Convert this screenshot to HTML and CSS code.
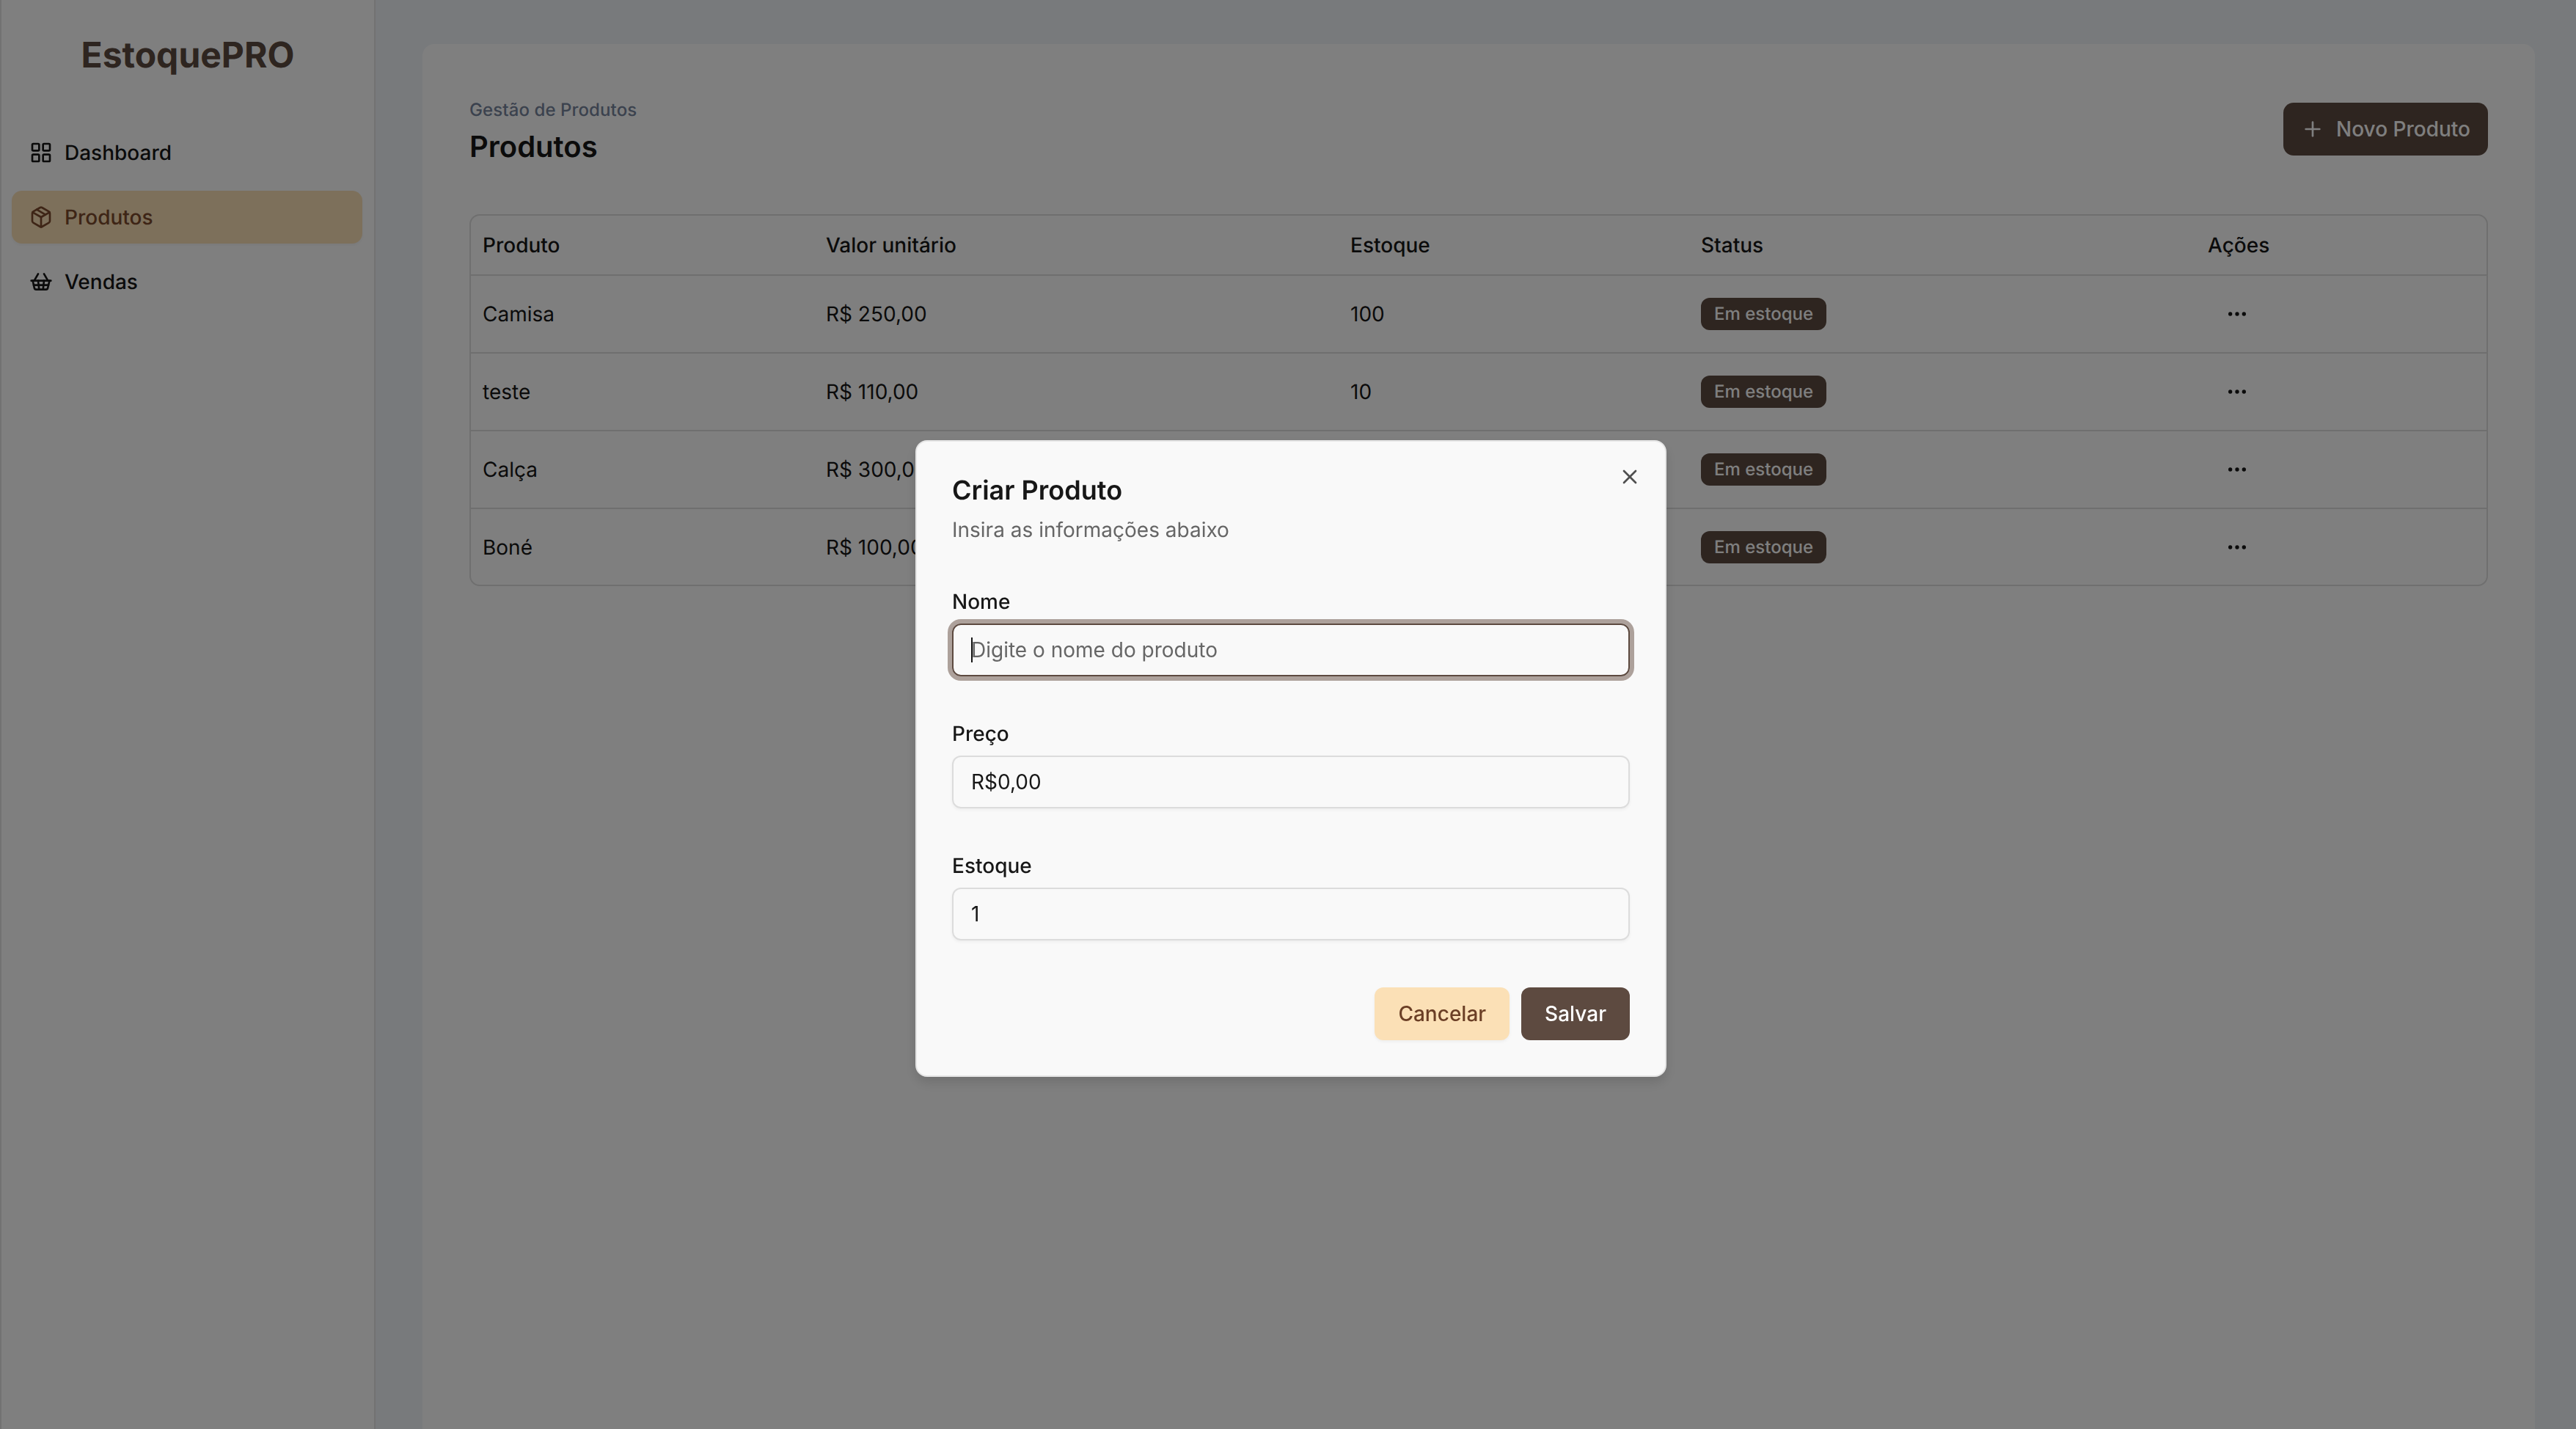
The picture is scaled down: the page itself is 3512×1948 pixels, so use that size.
FILE: index.html
```html
<!DOCTYPE html>
<html>
<head>
    <title>EstoquePRO</title>
    <link rel="stylesheet" href="styles.css">
</head>
<body>
    <div class="app">
        <aside class="sidebar">
            <div class="brand">EstoquePRO</div>
            <nav class="nav">
                <a class="nav-item">
                    <svg class="icon" viewBox="0 0 24 24"><rect x="3" y="3" width="7" height="7" rx="1"/><rect x="14" y="3" width="7" height="7" rx="1"/><rect x="14" y="14" width="7" height="7" rx="1"/><rect x="3" y="14" width="7" height="7" rx="1"/></svg>
                    Dashboard
                </a>
                <a class="nav-item active">
                    <svg class="icon" viewBox="0 0 24 24"><path d="M11 21.73a2 2 0 0 0 2 0l7-4A2 2 0 0 0 21 16V8a2 2 0 0 0-1-1.73l-7-4a2 2 0 0 0-2 0l-7 4A2 2 0 0 0 3 8v8a2 2 0 0 0 1 1.73z"/><path d="M12 22V12"/><polyline points="3.29 7 12 12 20.71 7"/><path d="m7.5 4.27 9 5.15"/></svg>
                    Produtos
                </a>
                <a class="nav-item">
                    <svg class="icon" viewBox="0 0 24 24"><path d="m15 11-1 9"/><path d="m19 11-4-7"/><path d="M2 11h20"/><path d="m3.5 11 1.6 7.4a2 2 0 0 0 2 1.6h9.8a2 2 0 0 0 2-1.6l1.7-7.4"/><path d="M4.5 15.5h15"/><path d="m5 11 4-7"/><path d="m9 11 1 9"/></svg>
                    Vendas
                </a>
            </nav>
        </aside>

        <main class="main">
            <section class="card">
                <header class="page-header">
                    <div>
                        <p class="crumb">Gestão de Produtos</p>
                        <h1 class="page-title">Produtos</h1>
                    </div>
                    <button class="btn-new">
                        <svg class="icon" viewBox="0 0 24 24"><path d="M5 12h14"/><path d="M12 5v14"/></svg>
                        Novo Produto
                    </button>
                </header>

                <div class="table-wrap">
                    <table class="table">
                        <thead>
                            <tr>
                                <th class="col-name">Produto</th>
                                <th class="col-price">Valor unitário</th>
                                <th class="col-stock">Estoque</th>
                                <th class="col-status">Status</th>
                                <th class="col-actions">Ações</th>
                            </tr>
                        </thead>
                        <tbody>
                            <tr>
                                <td>Camisa</td>
                                <td>R$ 250,00</td>
                                <td>100</td>
                                <td><span class="badge">Em estoque</span></td>
                                <td><svg class="icon dots" viewBox="0 0 24 24"><circle cx="12" cy="12" r="1"/><circle cx="19" cy="12" r="1"/><circle cx="5" cy="12" r="1"/></svg></td>
                            </tr>
                            <tr>
                                <td>teste</td>
                                <td>R$ 110,00</td>
                                <td>10</td>
                                <td><span class="badge">Em estoque</span></td>
                                <td><svg class="icon dots" viewBox="0 0 24 24"><circle cx="12" cy="12" r="1"/><circle cx="19" cy="12" r="1"/><circle cx="5" cy="12" r="1"/></svg></td>
                            </tr>
                            <tr>
                                <td>Calça</td>
                                <td>R$ 300,00</td>
                                <td>50</td>
                                <td><span class="badge">Em estoque</span></td>
                                <td><svg class="icon dots" viewBox="0 0 24 24"><circle cx="12" cy="12" r="1"/><circle cx="19" cy="12" r="1"/><circle cx="5" cy="12" r="1"/></svg></td>
                            </tr>
                            <tr>
                                <td>Boné</td>
                                <td>R$ 100,00</td>
                                <td>20</td>
                                <td><span class="badge">Em estoque</span></td>
                                <td><svg class="icon dots" viewBox="0 0 24 24"><circle cx="12" cy="12" r="1"/><circle cx="19" cy="12" r="1"/><circle cx="5" cy="12" r="1"/></svg></td>
                            </tr>
                        </tbody>
                    </table>
                </div>
            </section>
        </main>
    </div>

    <div class="overlay"></div>

    <div class="modal">
        <svg class="icon modal-close" viewBox="0 0 24 24"><path d="M18 6 6 18"/><path d="m6 6 12 12"/></svg>
        <h2 class="modal-title">Criar Produto</h2>
        <p class="modal-desc">Insira as informações abaixo</p>

        <form class="form">
            <div class="field">
                <label for="nome">Nome</label>
                <div class="input-box">
                    <input id="nome" class="input focused" type="text" placeholder="Digite o nome do produto">
                    <span class="caret"></span>
                </div>
            </div>
            <div class="field">
                <label for="preco">Preço</label>
                <input id="preco" class="input" type="text" value="R$0,00">
            </div>
            <div class="field">
                <label for="estoque">Estoque</label>
                <input id="estoque" class="input" type="text" value="1">
            </div>
            <div class="modal-actions">
                <button type="button" class="btn-cancel">Cancelar</button>
                <button type="button" class="btn-save">Salvar</button>
            </div>
        </form>
    </div>
</body>
</html>
```

FILE: styles.css
```css
* {
    box-sizing: border-box;
}

html, body {
    margin: 0;
    height: 100%;
    overflow: hidden;
}

body {
    font-family: Inter, "Liberation Sans", sans-serif;
    font-size: 28px;
    color: #171717;
    text-rendering: geometricPrecision;
}

.icon {
    width: 32px;
    height: 32px;
    flex-shrink: 0;
    fill: none;
    stroke: currentColor;
    stroke-width: 2;
    stroke-linecap: round;
    stroke-linejoin: round;
}

.app {
    display: flex;
    height: 1948px;
    background-color: #f1f5f9;
}

/* sidebar */
.sidebar {
    width: 512px;
    flex-shrink: 0;
    padding: 0 16px;
    background-color: #fff;
    border-left: 2px solid #e5e5e5;
    border-right: 2px solid #e5e5e5;
}

.brand {
    margin-top: 46px;
    height: 58px;
    line-height: 58px;
    text-align: center;
    font-size: 48px;
    font-weight: 700;
    color: #5d4a40;
}

.nav {
    display: flex;
    flex-direction: column;
    gap: 16px;
    margin-top: 68px;
    margin-left: -2px;
}

.nav-item {
    display: flex;
    align-items: center;
    gap: 16px;
    height: 72px;
    padding-left: 24px;
    border-radius: 14px;
    font-weight: 500;
}

.nav-item.active {
    background-color: #fbe0b6;
    color: #7c4a2d;
    box-shadow: 0 2px 4px rgba(0, 0, 0, 0.05);
}

/* main */
.main {
    flex: 1;
    padding: 60px 56px 0 64px;
}

.card {
    height: 100%;
    padding: 72px 64px 0;
    background-color: #fff;
    border-radius: 16px 16px 0 0;
}

.page-header {
    display: flex;
    justify-content: space-between;
    align-items: flex-start;
}

.crumb {
    margin: 0;
    font-size: 24px;
    line-height: 36px;
    font-weight: 500;
    letter-spacing: 0.1px;
    color: #76849c;
}

.page-title {
    margin: 0;
    font-size: 40px;
    line-height: 64px;
    font-weight: 600;
}

.btn-new {
    display: flex;
    align-items: center;
    gap: 16px;
    height: 72px;
    margin-top: 8px;
    padding: 0 24px;
    border: 0;
    border-radius: 14px;
    background-color: #5d4a40;
    color: #fff;
    font: inherit;
    font-weight: 500;
}

.table-wrap {
    margin-top: 60px;
    border: 2px solid #dedede;
    border-radius: 14px;
}

.table {
    width: 100%;
    table-layout: fixed;
    border-collapse: collapse;
}

.table th, .table td {
    padding: 0 16px;
    text-align: left;
}

.table th {
    height: 81px;
    font-weight: 500;
    border-bottom: 2px solid #dedede;
}

.table td {
    height: 106px;
    font-weight: 400;
    border-bottom: 2px solid #dedede;
}

.table tr:last-child td {
    height: 104px;
    border-bottom: 0;
}

.col-name { width: 468px; }
.col-price { width: 715px; }
.col-stock { width: 478px; }
.col-status { width: 691px; }

.badge {
    display: inline-block;
    height: 44px;
    padding: 0 18px;
    line-height: 44px;
    border-radius: 12px;
    background-color: #5d4a40;
    color: #fff;
    font-size: 24px;
    font-weight: 500;
    vertical-align: middle;
}

.dots {
    display: block;
    margin-left: 24px;
}

/* dialog */
.overlay {
    position: fixed;
    inset: 0;
    background-color: rgba(0, 0, 0, 0.5);
}

.modal {
    position: fixed;
    left: 1248px;
    top: 600px;
    width: 1024px;
    padding: 48px;
    background-color: #f9f9f9;
    border: 2px solid #e5e5e5;
    border-radius: 16px;
    box-shadow: 0 8px 16px rgba(0, 0, 0, 0.12);
}

.modal-close {
    position: absolute;
    top: 32px;
    right: 32px;
    color: #171717;
    opacity: 0.75;
}

.modal-title {
    margin: 0;
    font-size: 36px;
    line-height: 36px;
    font-weight: 600;
}

.modal-desc {
    margin: 16px 0 0;
    line-height: 40px;
    color: #666;
}

.form {
    display: flex;
    flex-direction: column;
    gap: 64px;
    margin-top: 64px;
}

.field {
    display: flex;
    flex-direction: column;
    gap: 16px;
}

.field label {
    line-height: 28px;
    font-weight: 500;
}

.input-box {
    position: relative;
}

.input {
    display: block;
    width: 100%;
    height: 72px;
    padding: 0 24px;
    border: 2px solid #dcdcdc;
    border-radius: 12px;
    background: transparent;
    box-shadow: 0 2px 4px rgba(0, 0, 0, 0.05);
    color: #171717;
    font: inherit;
    outline: none;
}

.input::placeholder {
    color: #666;
}

.input.focused {
    border-color: #5d4a40;
    box-shadow: 0 0 0 6px #ada19b;
}

.caret {
    position: absolute;
    left: 26px;
    top: 19px;
    width: 2px;
    height: 34px;
    background-color: #171717;
}

.modal-actions {
    display: flex;
    justify-content: flex-end;
    gap: 16px;
}

.btn-cancel, .btn-save {
    height: 72px;
    padding: 0 32px;
    border: 0;
    border-radius: 12px;
    font: inherit;
    font-weight: 500;
}

.btn-cancel {
    background-color: #fbe0b6;
    color: #6b3f26;
    box-shadow: 0 2px 4px rgba(0, 0, 0, 0.05);
}

.btn-save {
    background-color: #5d4a40;
    color: #fff;
}
```
